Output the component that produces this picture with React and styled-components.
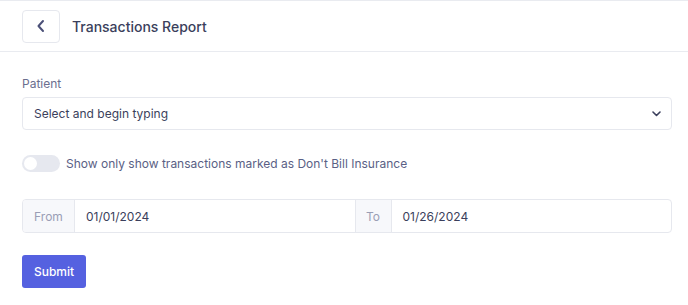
import React, { useState } from "react"
import styled, { createGlobalStyle } from "styled-components"

const GlobalStyle = createGlobalStyle`
  * { box-sizing: border-box; }
  body {
    margin: 0;
    background: #fff;
    font-family: Inter, "Noto Sans", sans-serif;
    color: #3b3f5c;
  }
`

const App = () => {
  const [dontBill, setDontBill] = useState(false)

  return (
    <Page>
      <GlobalStyle />
      <Header>
        <BackButton aria-label="Back">
          <svg width="14" height="14" viewBox="0 0 14 14" fill="none">
            <path
              d="M9 2L4.5 7L9 12"
              stroke="#4b5078"
              strokeWidth="2"
              strokeLinecap="round"
              strokeLinejoin="round"
            />
          </svg>
        </BackButton>
        <Title>Transactions Report</Title>
      </Header>

      <Body>
        <Field>
          <Label>Patient</Label>
          <Select>
            <span>Select and begin typing</span>
            <svg width="9" height="6" viewBox="0 0 9 6" fill="none">
              <path
                d="M1 1l3.5 3.5L8 1"
                stroke="#3b3f5c"
                strokeWidth="1.6"
                strokeLinecap="round"
                strokeLinejoin="round"
              />
            </svg>
          </Select>
        </Field>

        <ToggleRow>
          <Switch $on={dontBill} onClick={() => setDontBill(!dontBill)} />
          <ToggleText>
            Show only show transactions marked as Don't Bill Insurance
          </ToggleText>
        </ToggleRow>

        <DateGroup>
          <Addon>From</Addon>
          <DateInput>01/01/2024</DateInput>
          <Addon $border>To</Addon>
          <DateInput>01/26/2024</DateInput>
        </DateGroup>

        <SubmitButton>Submit</SubmitButton>
      </Body>
    </Page>
  )
}

export default App

const Page = styled.div`
  width: 688px;
  height: 305px;
  border-top: 1px solid #e9ebf0;
`

const Header = styled.div`
  display: flex;
  align-items: center;
  gap: 12px;
  height: 51px;
  padding: 0 22px;
  border-bottom: 1px solid #e9ebf0;
`

const BackButton = styled.button`
  width: 38px;
  height: 33px;
  display: flex;
  align-items: center;
  justify-content: center;
  background: #fff;
  border: 1px solid #e6e8ee;
  border-radius: 4px;
  padding: 0;
  cursor: pointer;
`

const Title = styled.h1`
  margin: 0;
  font-size: 14px;
  font-weight: 500;
  color: #3b3f5c;
`

const Body = styled.div`
  padding: 24px 16px 0 22px;
  display: flex;
  flex-direction: column;
`

const Field = styled.div`
  display: flex;
  flex-direction: column;
  gap: 6px;
`

const Label = styled.label`
  font-size: 12px;
  color: #6b6f8f;
`

const Select = styled.div`
  height: 33px;
  display: flex;
  align-items: center;
  justify-content: space-between;
  padding: 0 10px 0 11px;
  border: 1px solid #e6e8ee;
  border-radius: 4px;
  font-size: 12px;
  color: #3b3f5c;
`

const ToggleRow = styled.div`
  display: flex;
  align-items: center;
  gap: 6px;
  margin-top: 25px;
`

const Switch = styled.button`
  position: relative;
  width: 38px;
  height: 17px;
  border: none;
  border-radius: 9px;
  background: ${(p) => (p.$on ? "#5561e0" : "#e6e8ef")};
  padding: 0;
  cursor: pointer;

  &::after {
    content: "";
    position: absolute;
    top: 2px;
    left: ${(p) => (p.$on ? "23px" : "2px")};
    width: 13px;
    height: 13px;
    border-radius: 50%;
    background: #fff;
  }
`

const ToggleText = styled.span`
  font-size: 12px;
  color: #5a5f85;
`

const DateGroup = styled.div`
  display: grid;
  grid-template-columns: 52px 1fr 37px 1fr;
  height: 34px;
  margin-top: 27px;
  border: 1px solid #e6e8ee;
  border-radius: 4px;
  overflow: hidden;
`

const Addon = styled.div`
  display: flex;
  align-items: center;
  justify-content: center;
  background: #f7f8fb;
  border-right: 1px solid #e6e8ee;
  border-left: ${(p) => (p.$border ? "1px solid #e6e8ee" : "none")};
  font-size: 12px;
  color: #9a9eb5;
`

const DateInput = styled.div`
  display: flex;
  align-items: center;
  padding: 0 11px;
  font-size: 12px;
  color: #3b3f5c;
`

const SubmitButton = styled.button`
  align-self: flex-start;
  margin-top: 22px;
  width: 64px;
  height: 33px;
  border: none;
  border-radius: 3px;
  background: #5561e0;
  color: #fff;
  font-family: inherit;
  font-size: 12px;
  font-weight: 500;
  cursor: pointer;
`
